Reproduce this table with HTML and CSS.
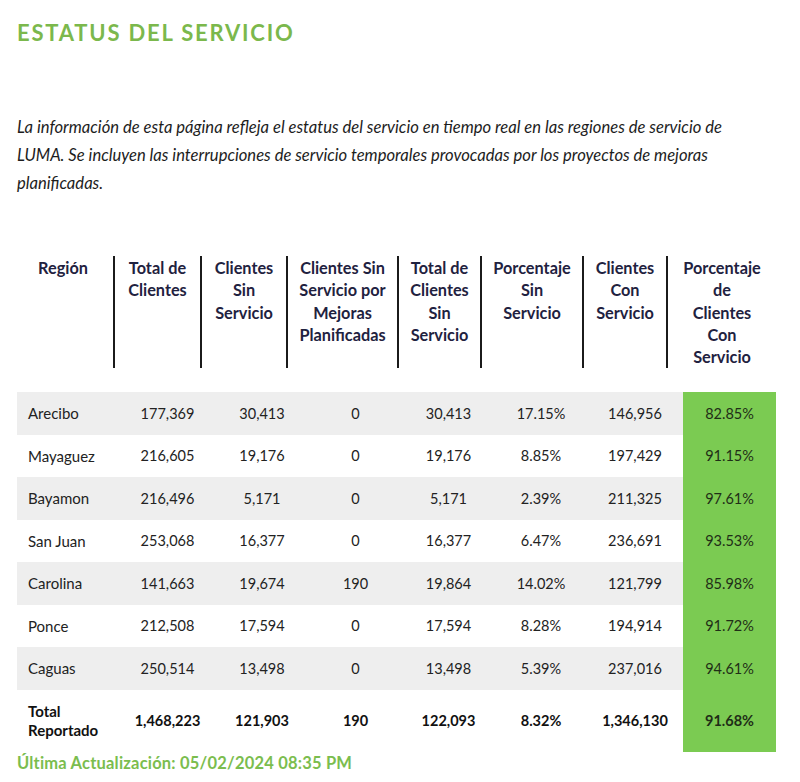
FILE: index.html
```html
<!DOCTYPE html>
<html lang="es">
<head>
<meta charset="utf-8">
<title>Estatus del Servicio</title>
<link rel="stylesheet" href="styles.css">
</head>
<body>
<div class="page">
  <h1 class="title">ESTATUS DEL SERVICIO</h1>
  <p class="intro">La información de esta página refleja el estatus del servicio en tiempo real en las regiones de servicio de LUMA. Se incluyen las interrupciones de servicio temporales provocadas por los proyectos de mejoras planificadas.</p>

  <div class="thead">
    <div class="th first">Región</div>
    <div class="th">Total de<br>Clientes</div>
    <div class="th">Clientes<br>Sin<br>Servicio</div>
    <div class="th">Clientes Sin<br>Servicio por<br>Mejoras<br>Planificadas</div>
    <div class="th">Total de<br>Clientes<br>Sin<br>Servicio</div>
    <div class="th">Porcentaje<br>Sin<br>Servicio</div>
    <div class="th">Clientes<br>Con<br>Servicio</div>
    <div class="th">Porcentaje<br>de<br>Clientes<br>Con<br>Servicio</div>
  </div>

  <div class="tbody">
    <div class="row alt"><div class="c reg">Arecibo</div><div class="c">177,369</div><div class="c">30,413</div><div class="c">0</div><div class="c">30,413</div><div class="c">17.15%</div><div class="c">146,956</div><div class="c pct">82.85%</div></div>
    <div class="row"><div class="c reg">Mayaguez</div><div class="c">216,605</div><div class="c">19,176</div><div class="c">0</div><div class="c">19,176</div><div class="c">8.85%</div><div class="c">197,429</div><div class="c pct">91.15%</div></div>
    <div class="row alt"><div class="c reg">Bayamon</div><div class="c">216,496</div><div class="c">5,171</div><div class="c">0</div><div class="c">5,171</div><div class="c">2.39%</div><div class="c">211,325</div><div class="c pct">97.61%</div></div>
    <div class="row"><div class="c reg">San Juan</div><div class="c">253,068</div><div class="c">16,377</div><div class="c">0</div><div class="c">16,377</div><div class="c">6.47%</div><div class="c">236,691</div><div class="c pct">93.53%</div></div>
    <div class="row alt"><div class="c reg">Carolina</div><div class="c">141,663</div><div class="c">19,674</div><div class="c">190</div><div class="c">19,864</div><div class="c">14.02%</div><div class="c">121,799</div><div class="c pct">85.98%</div></div>
    <div class="row"><div class="c reg">Ponce</div><div class="c">212,508</div><div class="c">17,594</div><div class="c">0</div><div class="c">17,594</div><div class="c">8.28%</div><div class="c">194,914</div><div class="c pct">91.72%</div></div>
    <div class="row alt"><div class="c reg">Caguas</div><div class="c">250,514</div><div class="c">13,498</div><div class="c">0</div><div class="c">13,498</div><div class="c">5.39%</div><div class="c">237,016</div><div class="c pct">94.61%</div></div>
    <div class="row total"><div class="c reg">Total<br>Reportado</div><div class="c">1,468,223</div><div class="c">121,903</div><div class="c">190</div><div class="c">122,093</div><div class="c">8.32%</div><div class="c">1,346,130</div><div class="c pct">91.68%</div></div>
  </div>

  <p class="updated">Última Actualización: 05/02/2024 08:35 PM</p>
</div>
</body>
</html>
```

FILE: styles.css
```css
* { box-sizing: border-box; }
html, body { margin: 0; padding: 0; background: #ffffff; }
body { font-family: "Lato", "Liberation Sans", sans-serif; color: #222; }

.page { padding: 0 20px 0 17px; }

.title {
  margin: 0;
  padding-top: 21px;
  font-size: 22px;
  line-height: 24px;
  font-weight: 700;
  letter-spacing: 1.8px;
  color: #7bb84c;
}

.intro {
  margin: 68px 0 0 0;
  font-style: italic;
  font-size: 16.6px;
  line-height: 28px;
  color: #1d1d1d;
  letter-spacing: 0;
  width: 740px;
}

.thead {
  display: grid;
  grid-template-columns: 96px 87px 86px 111px 83px 102px 84px 110px;
  margin-top: 59px;
  width: 759px;
  height: 112px;
}
.th {
  border-left: 2px solid #1b1b1b;
  text-align: center;
  font-weight: 700;
  font-size: 16.3px;
  line-height: 22.3px;
  color: #1f2240;
  padding: 1px 0 0 0;
  white-space: nowrap;
}
.th.first { border-left: none; padding-right: 4px; }

.tbody {
  margin-top: 24px;
  width: 759px;
}
.row {
  display: grid;
  grid-template-columns: 103px 95px 94px 93px 93px 92px 96px 93px;
  height: 42.5px;
  font-size: 14.5px;
  color: #222;
}
.row.alt { background: #eeeeee; }
.c {
  display: flex;
  align-items: center;
  justify-content: center;
}
.c.reg { justify-content: flex-start; padding-left: 11px; font-size: 15px; }
.c.pct { background: #7bcb52; color: #1f2e17; }

.row.total { height: 62px; font-weight: 700; color: #111; }
.row.total .c.reg { line-height: 19px; }

.updated {
  margin: 1px 0 0 0;
  font-size: 16.5px;
  font-weight: 700;
  color: #7bbd4e;
  letter-spacing: 0.2px;
}
```
